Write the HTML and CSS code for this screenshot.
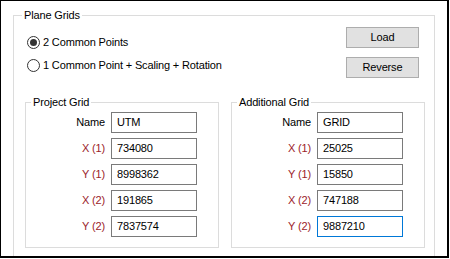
FILE: index.html
```html
<!DOCTYPE html>
<html>
<head>
<meta charset="utf-8">
<link rel="stylesheet" href="styles.css">
</head>
<body>
<div class="window">
  <div class="group outer">
    <div class="group-title">Plane Grids</div>
    <div class="top-row">
      <div class="radios">
        <div class="radio"><span class="radio-mark checked"></span><span>2 Common Points</span></div>
        <div class="radio"><span class="radio-mark"></span><span>1 Common Point + Scaling + Rotation</span></div>
      </div>
      <div class="buttons">
        <div class="btn">Load</div>
        <div class="btn">Reverse</div>
      </div>
    </div>
    <div class="grids">
      <div class="group inner">
        <div class="group-title">Project Grid</div>
        <div class="form">
          <div class="lbl">Name</div><div class="field">UTM</div>
          <div class="lbl req">X (1)</div><div class="field">734080</div>
          <div class="lbl req">Y (1)</div><div class="field">8998362</div>
          <div class="lbl req">X (2)</div><div class="field">191865</div>
          <div class="lbl req">Y (2)</div><div class="field">7837574</div>
        </div>
      </div>
      <div class="group inner">
        <div class="group-title">Additional Grid</div>
        <div class="form">
          <div class="lbl">Name</div><div class="field">GRID</div>
          <div class="lbl req">X (1)</div><div class="field">25025</div>
          <div class="lbl req">Y (1)</div><div class="field">15850</div>
          <div class="lbl req">X (2)</div><div class="field">747188</div>
          <div class="lbl req">Y (2)</div><div class="field focus">9887210</div>
        </div>
      </div>
    </div>
  </div>
</div>
</body>
</html>
```

FILE: styles.css
```css
html, body {
  margin: 0;
  padding: 0;
  background: #ffffff;
}
body {
  font-family: "Liberation Sans", Arial, sans-serif;
  font-size: 11px;
  line-height: 13px;
  letter-spacing: -0.15px;
  color: #000000;
}
.window {
  box-sizing: border-box;
  width: 449px;
  height: 258px;
  border-left: 1px solid #000;
  border-top: 1px solid #000;
  border-right: 2px solid #000;
  border-bottom: 2px solid #000;
  overflow: hidden;
  background: #fff;
}
.group {
  position: relative;
  border: 1px solid #dcdcdc;
  box-sizing: border-box;
}
.group-title {
  position: absolute;
  background: #fff;
  padding: 0 2px;
  white-space: nowrap;
}
.outer {
  margin: 14px 0 0 12px;
  width: 422px;
  height: 280px;
  padding: 11px 9px 0 11px;
}
.outer > .group-title {
  left: 8px;
  top: -7px;
}
.top-row {
  display: flex;
  justify-content: space-between;
  height: 75px;
}
.radios {
  padding: 9px 0 0 2px;
  display: flex;
  flex-direction: column;
  gap: 10px;
}
.radio {
  display: flex;
  align-items: center;
  gap: 3px;
  height: 13px;
  white-space: nowrap;
}
.radio-mark {
  box-sizing: border-box;
  width: 13px;
  height: 13px;
  border: 1px solid #333;
  border-radius: 50%;
  display: flex;
  align-items: center;
  justify-content: center;
  background: #fff;
}
.radio-mark.checked::after {
  content: "";
  width: 7px;
  height: 7px;
  border-radius: 50%;
  background: #333;
}
.buttons {
  display: flex;
  flex-direction: column;
  gap: 9px;
  margin-right: 6px;
}
.btn {
  box-sizing: border-box;
  width: 73px;
  height: 21px;
  background: #e1e1e1;
  border: 1px solid #adadad;
  display: flex;
  align-items: center;
  justify-content: center;
}
.grids {
  display: flex;
  gap: 12px;
}
.inner {
  flex: 0 0 194px;
  width: 194px;
  height: 146px;
  padding-top: 9px;
}
.inner > .group-title {
  left: 5px;
  top: -7px;
}
.form {
  display: grid;
  grid-template-columns: 79px 86px;
  column-gap: 6px;
  row-gap: 5px;
  grid-auto-rows: 21px;
}
.lbl {
  text-align: right;
  align-self: center;
}
.req {
  color: #9b1c2a;
}
.field {
  box-sizing: border-box;
  border: 1px solid #7a7a7a;
  padding: 0 0 0 5px;
  display: flex;
  align-items: center;
}
.field.focus {
  border-color: #0078d7;
}
```
